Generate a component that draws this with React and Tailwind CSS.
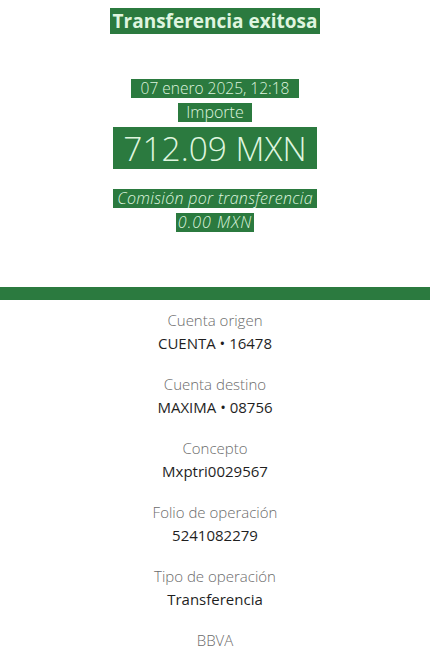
import React from "react";

const DETAILS = [
  { label: "Cuenta origen", value: "CUENTA • 16478" },
  { label: "Cuenta destino", value: "MAXIMA • 08756" },
  { label: "Concepto", value: "Mxptri0029567" },
  { label: "Folio de operación", value: "5241082279" },
  { label: "Tipo de operación", value: "Transferencia" },
];

function Mark({ children, className = "" }) {
  return (
    <span className={`bg-[#2b7a3f] text-[#dff5df] px-1 ${className}`}>{children}</span>
  );
}

export default function App() {
  return (
    <div className="w-[430px] h-[661px] bg-white overflow-hidden font-['Open_Sans','Lato',sans-serif] text-center">
      {/* Header */}
      <div className="pt-[8px] flex flex-col items-center">
        <Mark className="text-[19px] font-bold leading-[26px] px-[3px]">Transferencia exitosa</Mark>
      </div>

      {/* Amount block */}
      <div className="mt-[45px] flex flex-col items-center">
        <Mark className="text-[15.5px] font-light leading-[19px] px-[10px]">07 enero 2025, 12:18</Mark>
        <Mark className="mt-[5px] text-[16px] font-light leading-[19px] px-[8px]">Importe</Mark>
        <Mark className="mt-[5px] text-[33.5px] font-light leading-[42px] px-[10px]">712.09 MXN</Mark>
        <Mark className="mt-[20px] text-[16px] italic font-light leading-[19px] tracking-[0.3px] px-[4px]">
          Comisión por transferencia
        </Mark>
        <Mark className="mt-[5px] text-[16px] italic font-light leading-[19px] tracking-[1px] px-[2px]">0.00 MXN</Mark>
      </div>

      {/* Divider bar */}
      <div className="mt-[55px] h-[13px] bg-[#2b7a3f]" />

      {/* Details */}
      <div className="pt-[10px] flex flex-col gap-[20px]">
        {DETAILS.map((d) => (
          <div key={d.label} className="flex flex-col items-center">
            <span className="text-[15px] leading-[20px] font-light text-[#6b6b6b]">{d.label}</span>
            <span className="mt-[3px] text-[15px] leading-[21px] text-[#1f1f1f]">{d.value}</span>
          </div>
        ))}
        <div className="flex flex-col items-center">
          <span className="text-[15px] leading-[20px] font-light text-[#6b6b6b]">BBVA</span>
        </div>
      </div>
    </div>
  );
}
